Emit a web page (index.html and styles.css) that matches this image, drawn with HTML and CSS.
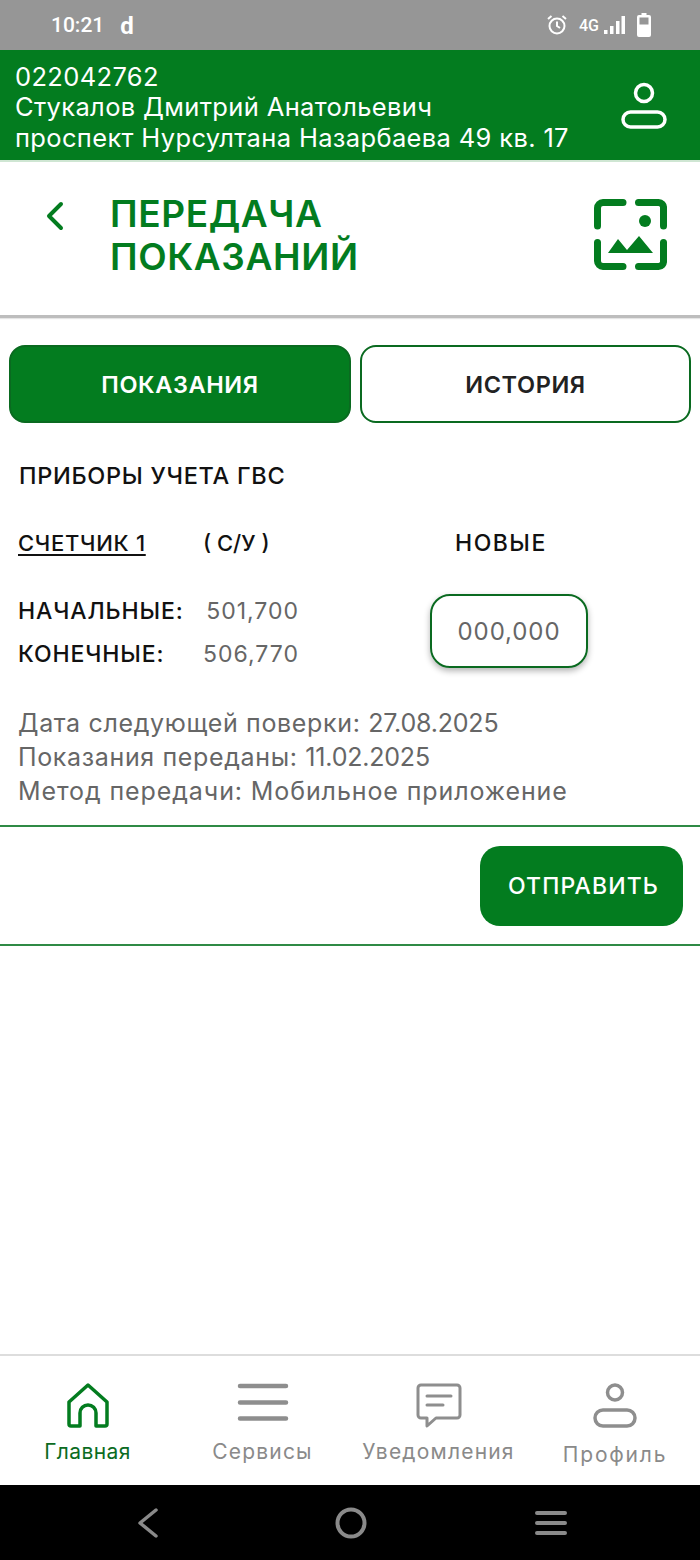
FILE: index.html
```html
<!DOCTYPE html>
<html lang="ru">
<head>
    <meta charset="UTF-8">
    <meta name="viewport" content="width=device-width, initial-scale=1.0">
    <title>Передача показаний</title>
    <link rel="stylesheet" href="styles.css">
</head>
<body>
<div class="app">
    <div class="status-bar">
        <div class="status-left">
            <span class="clock">10:21</span>
            <span class="status-d">d</span>
        </div>
        <div class="status-right">
            <svg class="alarm" width="22" height="22" viewBox="0 0 22 22" fill="none" stroke="#fff" stroke-width="2">
                <circle cx="11" cy="12" r="7.500"/>
                <path d="M11 7.500V12l3 2M2 5l3.500-3M20 5l-3.500-3"/>
            </svg>
            <span class="net">4G</span>
            <svg width="21" height="20" viewBox="0 0 21 20" fill="#fff">
                <rect x="0" y="15" width="3.500" height="4"/>
                <rect x="6" y="11" width="3.500" height="8"/>
                <rect x="12" y="6" width="3.500" height="13"/>
                <rect x="17.500" y="1" width="3.500" height="18"/>
            </svg>
            <svg class="battery" width="14" height="24" viewBox="0 0 14 24" fill="#fff">
                <path d="M4.500 0h5v2H12a2 2 0 0 1 2 2v18a2 2 0 0 1-2 2H2a2 2 0 0 1-2-2V4a2 2 0 0 1 2-2h2.500z"/>
                <rect x="2.500" y="4.500" width="9" height="7" fill="#969696"/>
            </svg>
        </div>
    </div>

    <header class="account">
        <div class="account-text">
            <div>022042762</div>
            <div>Стукалов Дмитрий Анатольевич</div>
            <div>проспект Нурсултана Назарбаева 49 кв. 17</div>
        </div>
        <svg class="account-icon" width="46" height="47" viewBox="0 0 46 47" fill="none" stroke="#fff" stroke-width="3.500">
            <circle cx="23" cy="11" r="8.500"/>
            <rect x="2" y="30" width="42" height="15" rx="7.500"/>
        </svg>
    </header>

    <div class="title-bar">
        <svg class="back" width="20" height="30" viewBox="0 0 20 30" fill="none" stroke="#037c1f" stroke-width="4" stroke-linecap="round" stroke-linejoin="round">
            <path d="M16 3L4 15l12 12"/>
        </svg>
        <h1 class="title">ПЕРЕДАЧА<br>ПОКАЗАНИЙ</h1>
        <svg class="scan" width="73" height="71" viewBox="0 0 73 71" fill="#037c1f">
            <path d="M3.500 27V9a5.500 5.500 0 0 1 5.500-5.500h20M44.500 3.500h20a5 5 0 0 1 5 5.500v18M3.500 43.500V62a5.500 5.500 0 0 0 5.500 5.500h20M44.500 67.500h20a5 5 0 0 0 5-5.500V43.500" fill="none" stroke="#037c1f" stroke-width="7" stroke-linecap="round"/>
            <circle cx="51" cy="22" r="6"/>
            <path d="M14 54l10-14 9 11 12-14 14 17z"/>
        </svg>
    </div>

    <main class="content">
        <div class="tabs">
            <div class="tab tab-active">ПОКАЗАНИЯ</div>
            <div class="tab tab-second">ИСТОРИЯ</div>
        </div>

        <div class="section-name">ПРИБОРЫ УЧЕТА ГВС</div>

        <div class="meter">
            <div class="meter-head">
                <span class="meter-name">СЧЕТЧИК 1</span>
                <span class="meter-type">( С/У )</span>
                <span class="meter-new">НОВЫЕ</span>
            </div>
            <div class="meter-body">
                <div class="readings">
                    <div class="reading">
                        <span class="reading-label">НАЧАЛЬНЫЕ:</span>
                        <span class="reading-value">501,700</span>
                    </div>
                    <div class="reading">
                        <span class="reading-label">КОНЕЧНЫЕ:</span>
                        <span class="reading-value">506,770</span>
                    </div>
                </div>
                <div class="new-input">000,000</div>
            </div>
            <div class="meter-info">
                <div>Дата следующей поверки: <span class="date">27.08.2025</span></div>
                <div>Показания переданы: <span class="date">11.02.2025</span></div>
                <div class="info-method">Метод передачи: Мобильное приложение</div>
            </div>
        </div>

        <div class="send-row">
            <button class="send-btn">ОТПРАВИТЬ</button>
        </div>
    </main>

    <nav class="tabbar">
        <div class="tabbar-item tabbar-active">
            <svg width="44" height="46" viewBox="0 0 44 46" fill="none" stroke="#037c1f" stroke-width="3.500" stroke-linejoin="round">
                <path d="M22 2L3 19v22a2 2 0 0 0 2 2h9V30a8 8 0 0 1 16 0v13h9a2 2 0 0 0 2-2V19z"/>
            </svg>
            <span>Главная</span>
        </div>
        <div class="tabbar-item">
            <svg width="52" height="46" viewBox="0 0 52 46" fill="none" stroke="#8e8e8e" stroke-width="4.500" stroke-linecap="round">
                <path d="M3 3h46M3 19.500h46M3 35.500h46"/>
            </svg>
            <span>Сервисы</span>
        </div>
        <div class="tabbar-item">
            <svg width="46" height="46" viewBox="0 0 46 46" fill="none" stroke="#8e8e8e" stroke-width="3" stroke-linejoin="round" stroke-linecap="round">
                <path d="M5 2h36a3 3 0 0 1 3 3v27a3 3 0 0 1-3 3H20l-9 8v-8H5a3 3 0 0 1-3-3V5a3 3 0 0 1 3-3z"/>
                <path d="M11 13h24M11 22h16"/>
            </svg>
            <span>Уведомления</span>
        </div>
        <div class="tabbar-item tabbar-last">
            <svg width="46" height="46" viewBox="0 0 46 46" fill="none" stroke="#8e8e8e" stroke-width="3.500">
                <circle cx="23" cy="9.500" r="7.500"/>
                <rect x="3" y="27" width="40" height="16" rx="8"/>
            </svg>
            <span>Профиль</span>
        </div>
    </nav>

    <div class="nav-bar">
        <svg class="nav-back" width="24" height="32" viewBox="0 0 24 32" fill="none" stroke="#8a8a8a" stroke-width="3.500" stroke-linecap="round" stroke-linejoin="round">
            <path d="M21 3L5 16l16 13"/>
        </svg>
        <svg class="nav-home" width="32" height="32" viewBox="0 0 32 32" fill="none" stroke="#8a8a8a" stroke-width="4">
            <circle cx="16" cy="16" r="13.500"/>
        </svg>
        <svg class="nav-menu" width="32" height="26" viewBox="0 0 32 26" fill="none" stroke="#8a8a8a" stroke-width="4" stroke-linecap="round">
            <path d="M2 3h28M2 13h28M2 23h28"/>
        </svg>
    </div>
</div>
</body>
</html>
```

FILE: styles.css
```css
*{
    box-sizing: border-box;
    padding: 0;
    margin: 0;
}

body{
    font-family: Inter, 'Open Sans', sans-serif;
    background: #fff;
}

.app{
    width: 700px;
    height: 1560px;
    display: flex;
    flex-direction: column;
    overflow: hidden;
}

.status-bar{
    height: 50px;
    flex: none;
    background: #969696;
    color: #fff;
    display: flex;
    justify-content: space-between;
    align-items: center;
    padding: 0 49px 0 51px;
}

.status-left{
    display: flex;
    align-items: center;
    gap: 16px;
}

.clock{
    font-family: Roboto, sans-serif;
    font-size: 21px;
    font-weight: 500;
}

.status-d{
    font-family: Roboto, sans-serif;
    font-size: 24px;
    font-weight: 700;
    margin-top: 1px;
}

.status-right{
    display: flex;
    align-items: center;
    gap: 5px;
}

.alarm{
    margin-right: 6px;
}

.net{
    font-family: Roboto, sans-serif;
    font-size: 16px;
    font-weight: 500;
}

.battery{
    margin-left: 7px;
}

.account{
    height: 112px;
    flex: none;
    background: #037c1f;
    border-bottom: 2px solid #cfe6d3;
    color: #fff;
    display: flex;
    justify-content: space-between;
    align-items: center;
    padding: 0 33px 0 15px;
}

.account-text{
    font-size: 25.500px;
    letter-spacing: .35px;
    line-height: 30.500px;
    padding-top: 5px;
}

.title-bar{
    height: 156px;
    flex: none;
    display: flex;
    align-items: center;
    border-bottom: 3px solid #bdbdbd;
    box-shadow: 0 1px 1px rgba(0, 0, 0, 0.1);
    padding: 0 33px 0 45px;
}

.back{
    margin-top: -45px;
}

.title{
    flex: 1;
    font-size: 37px;
    line-height: 43px;
    font-weight: 600;
    letter-spacing: .6px;
    color: #037c1f;
    margin-left: 45px;
    margin-top: -8px;
}

.scan{
    margin-top: -9px;
}

.content{
    flex: 1;
    padding-top: 27px;
}

.tabs{
    display: flex;
    gap: 9px;
    padding: 0 9px;
}

.tab{
    width: 342px;
    height: 78px;
    border: 2px solid #0a6a20;
    border-radius: 16px;
    display: flex;
    justify-content: center;
    align-items: center;
    font-size: 23.500px;
    font-weight: 600;
    letter-spacing: .6px;
    color: #222;
}

.tab-second{
    width: 331px;
}

.tab-active{
    background: #037c1f;
    color: #fff;
}

.section-name{
    font-size: 23.500px;
    font-weight: 500;
    letter-spacing: .7px;
    color: #111;
    margin: 38px 0 0 19px;
}

.meter{
    padding: 0 18px;
}

.meter-head{
    display: flex;
    align-items: center;
    margin-top: 39px;
    font-size: 22px;
    font-weight: 500;
    color: #111;
}

.meter-name{
    width: 185px;
    text-decoration: underline;
    text-underline-offset: 3px;
    letter-spacing: .7px;
}

.meter-type{
    width: 252px;
}

.meter-new{
    font-size: 23px;
    letter-spacing: 1.500px;
}

.meter-body{
    display: flex;
    margin-top: 32px;
}

.readings{
    width: 412px;
}

.reading{
    display: flex;
    justify-content: space-between;
    width: 281px;
    height: 43px;
    align-items: center;
    font-size: 23px;
}

.reading-label{
    font-size: 23px;
    font-weight: 500;
    letter-spacing: .9px;
    color: #111;
}

.reading-value{
    color: #666;
    letter-spacing: 1px;
}

.new-input{
    width: 158px;
    height: 74px;
    margin-top: 5px;
    border: 2px solid #0a6a20;
    border-radius: 20px;
    box-shadow: 0 3px 6px rgba(0, 0, 0, 0.3);
    display: flex;
    justify-content: center;
    align-items: center;
    font-size: 24px;
    letter-spacing: .9px;
    color: #666;
}

.meter-info{
    margin-top: 32px;
    font-size: 25px;
    letter-spacing: .65px;
    line-height: 33.800px;
    color: #666;
}

.date{
    letter-spacing: -.2px;
}

.info-method{
    letter-spacing: .9px;
}

.send-row{
    display: flex;
    justify-content: flex-end;
    margin-top: 17px;
    padding: 19px 17px 18px 0;
    border-top: 2px solid #2f8a45;
    border-bottom: 2px solid #2f8a45;
}

.send-btn{
    width: 203px;
    height: 80px;
    border: 0;
    border-radius: 20px;
    padding-left: 4px;
    background: #037c1f;
    color: #fff;
    font-family: inherit;
    font-size: 23px;
    font-weight: 500;
    letter-spacing: 1.100px;
}

.tabbar{
    height: 131px;
    flex: none;
    border-top: 2px solid #ddd;
    display: grid;
    grid-template-columns: 175px 175px 177px 173px;
    padding-top: 27px;
    font-size: 21px;
    letter-spacing: 1.200px;
    color: #8a8a8a;
}

.tabbar-item{
    display: flex;
    flex-direction: column;
    align-items: center;
    gap: 10px;
    white-space: nowrap;
}

.tabbar-active{
    color: #0b6b22;
    letter-spacing: .4px;
}

.tabbar-last{
    padding-left: 3px;
}

.tabbar-last span{
    margin-top: 3px;
    letter-spacing: 1.800px;
}

.nav-bar{
    height: 75px;
    flex: none;
    background: #000;
    display: flex;
    align-items: center;
    padding-left: 135px;
}

.nav-home{
    margin-left: 176px;
}

.nav-menu{
    margin-left: 168px;
}
```
